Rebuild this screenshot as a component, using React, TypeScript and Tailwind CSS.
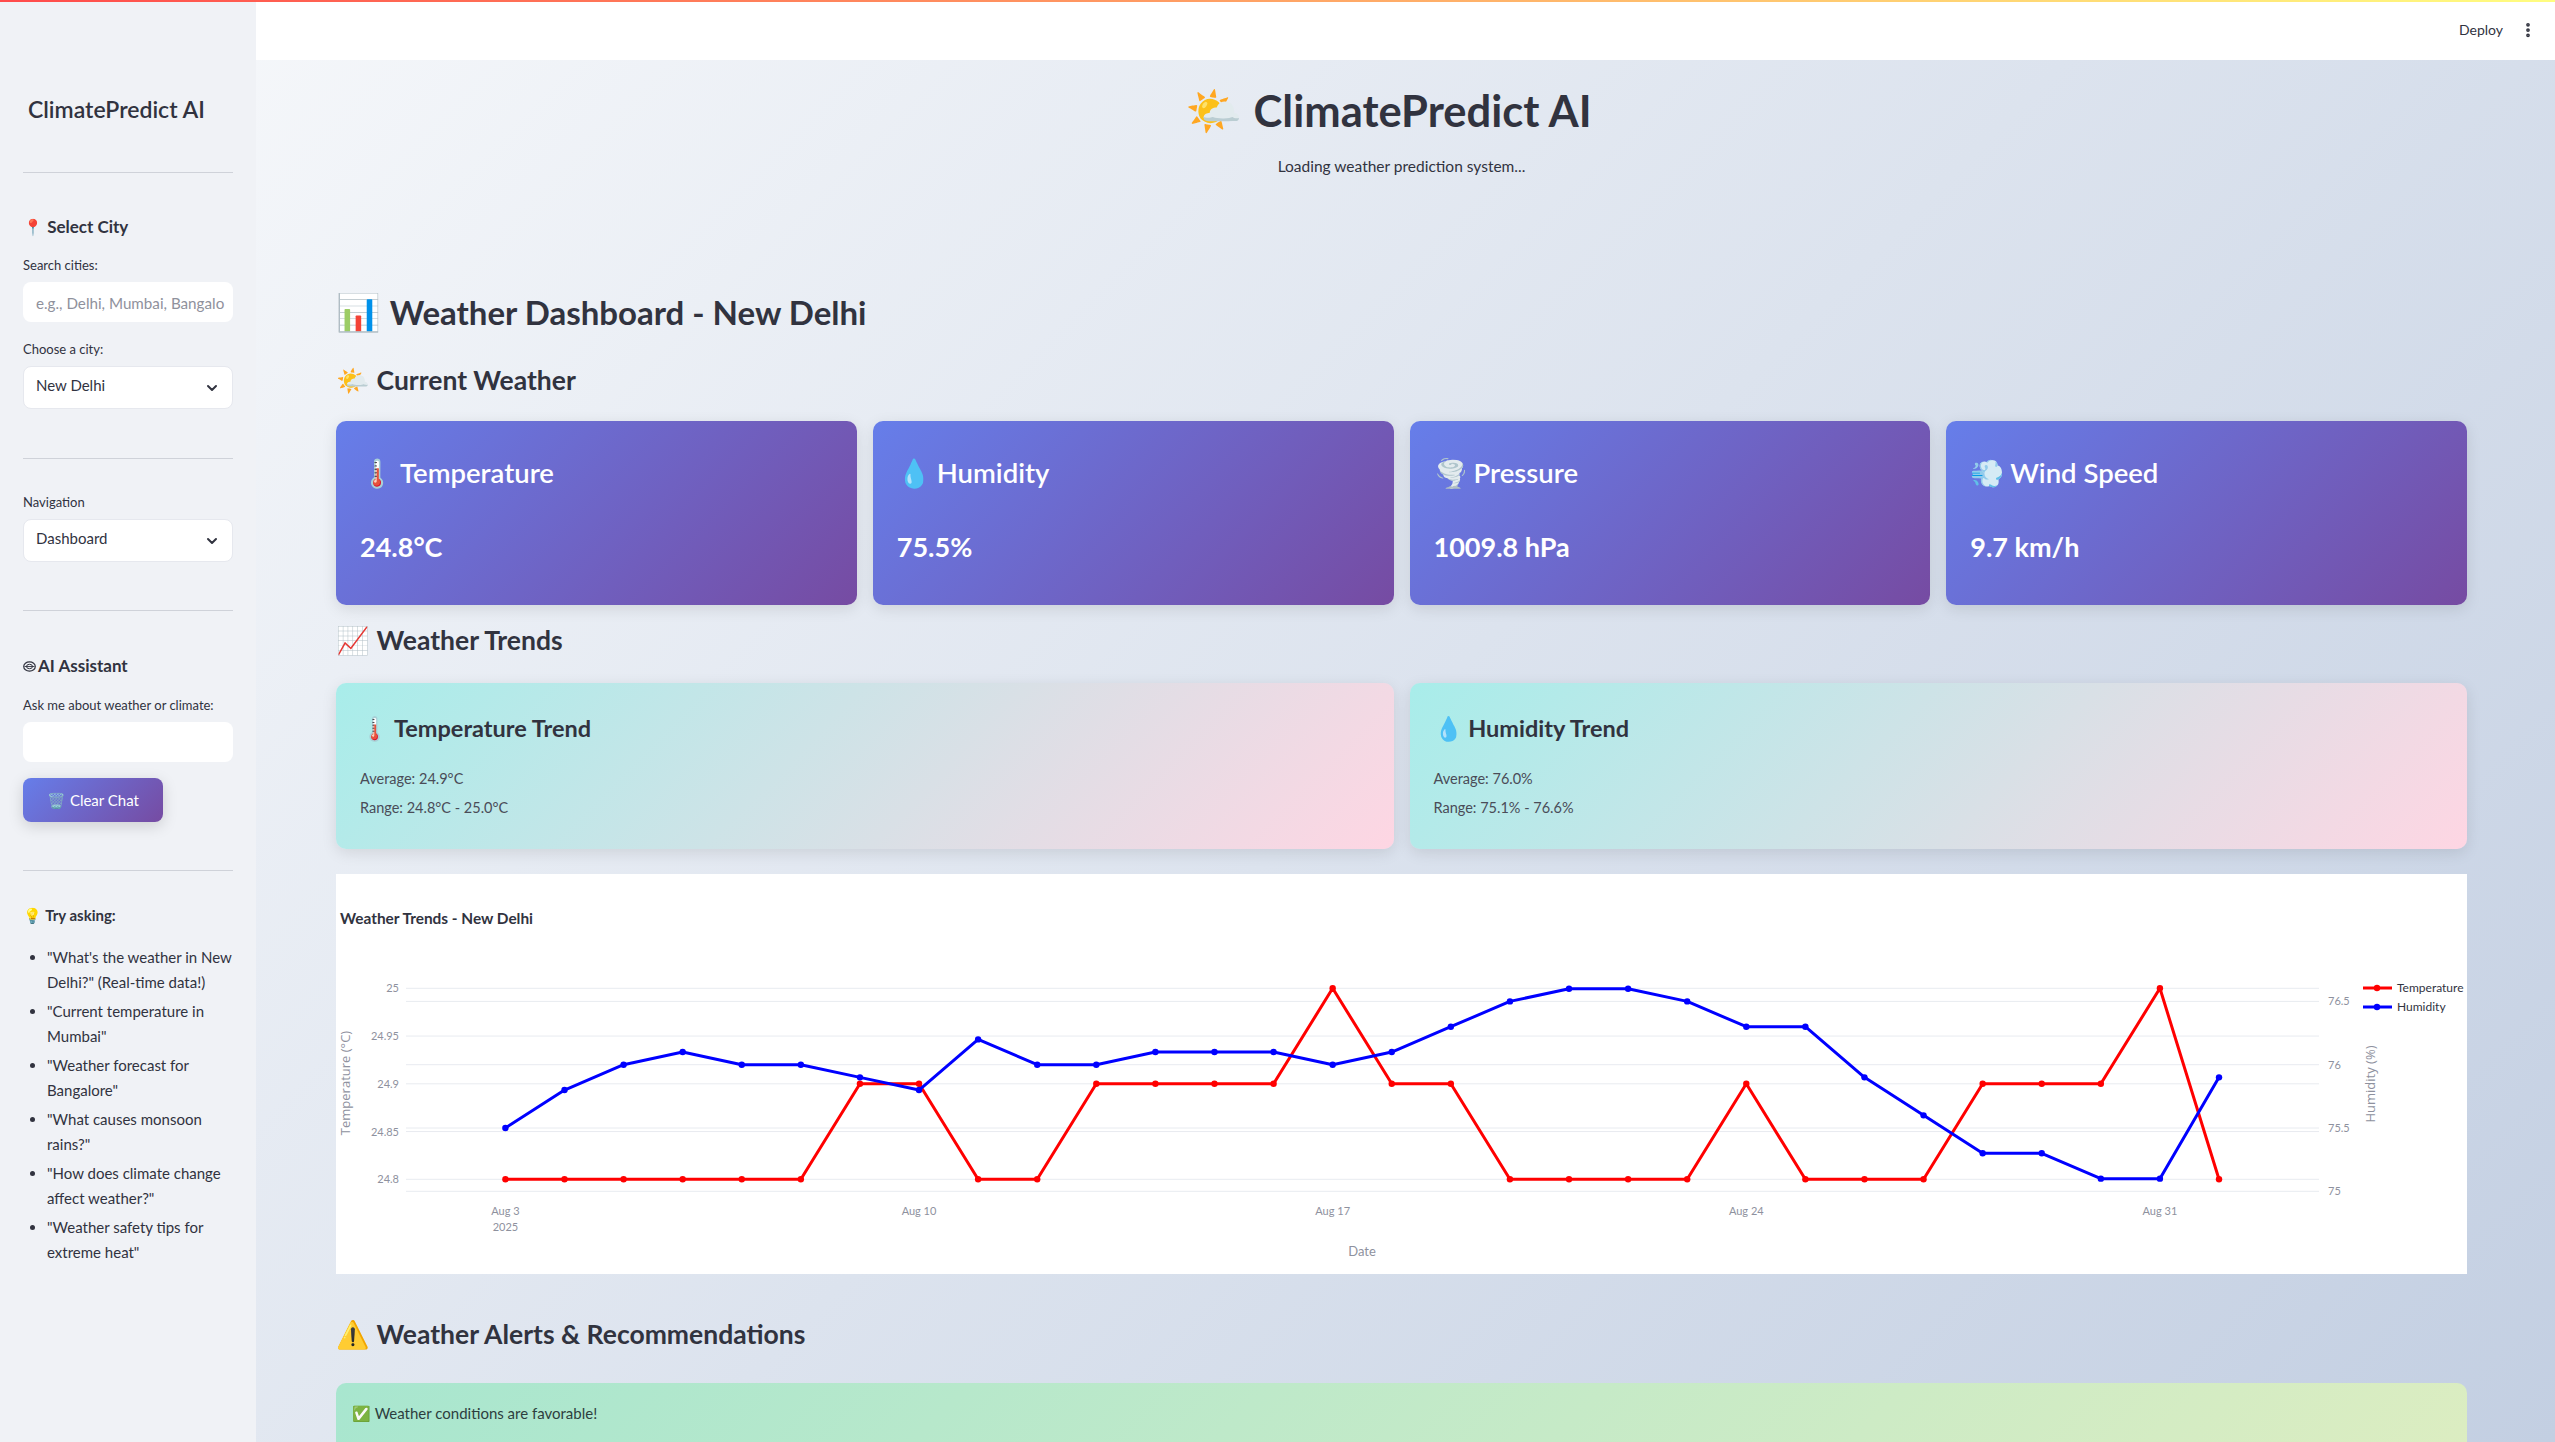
import { ChevronDown, EllipsisVertical } from 'lucide-react';

const FONT = 'font-["Lato","Noto_Sans",sans-serif]';

const temps = [24.8, 24.8, 24.8, 24.8, 24.8, 24.8, 24.9, 24.9, 24.8, 24.8, 24.9, 24.9, 24.9, 24.9, 25, 24.9, 24.9, 24.8, 24.8, 24.8, 24.8, 24.9, 24.8, 24.8, 24.8, 24.9, 24.9, 24.9, 25, 24.8];
const hums = [75.5, 75.8, 76, 76.1, 76, 76, 75.9, 75.8, 76.2, 76, 76, 76.1, 76.1, 76.1, 76, 76.1, 76.3, 76.5, 76.6, 76.6, 76.5, 76.3, 76.3, 75.9, 75.6, 75.3, 75.3, 75.1, 75.1, 75.9];

const px = (i: number) => 169.4 + i * 59.09;
const tempY = (v: number) => 114.3 + (25 - v) * 955;
const humY = (v: number) => 317.3 - (v - 75) * 126.6;

function WeatherChart() {
  const gridTemp = [25, 24.95, 24.9, 24.85, 24.8];
  const gridHum = [76.5, 76, 75.5, 75];
  const ticks = [
    { x: px(0), label: 'Aug 3' },
    { x: px(7), label: 'Aug 10' },
    { x: px(14), label: 'Aug 17' },
    { x: px(21), label: 'Aug 24' },
    { x: px(28), label: 'Aug 31' },
  ];
  return (
    <div className="mt-[25px] h-[400px] bg-white">
      <svg width="2131" height="400" viewBox="0 0 2131 400" className="block">
        <text x="4" y="50" fontSize="15.4" fontWeight="700" fill="#31333f" fontFamily="Lato">Weather Trends - New Delhi</text>
        {gridTemp.map((v) => (
          <g key={v}>
            <line x1="70" x2="1983" y1={tempY(v)} y2={tempY(v)} stroke="#e8ebf0" strokeWidth="1" />
            <text x="63" y={tempY(v) + 4} textAnchor="end" fontSize="11" fill="#8e919e" fontFamily="Lato">{v}</text>
          </g>
        ))}
        {gridHum.map((v) => (
          <g key={v}>
            <line x1="70" x2="1983" y1={humY(v)} y2={humY(v)} stroke="#e8ebf0" strokeWidth="1" />
            <text x="1992" y={humY(v) + 4} fontSize="11" fill="#8e919e" fontFamily="Lato">{v}</text>
          </g>
        ))}
        {ticks.map((t) => (
          <text key={t.label} x={t.x} y="341" textAnchor="middle" fontSize="11" fill="#8e919e" fontFamily="Lato">{t.label}</text>
        ))}
        <text x={px(0)} y="357" textAnchor="middle" fontSize="11" fill="#8e919e" fontFamily="Lato">2025</text>
        <text x="1026" y="382" textAnchor="middle" fontSize="13" fill="#8e919e" fontFamily="Lato">Date</text>
        <text transform="translate(14 209) rotate(-90)" textAnchor="middle" fontSize="13" fill="#8e919e" fontFamily="Open Sans">Temperature (°C)</text>
        <text transform="translate(2039 210) rotate(-90)" textAnchor="middle" fontSize="13" fill="#8e919e" fontFamily="Open Sans">Humidity (%)</text>

        <polyline points={temps.map((v, i) => `${px(i)},${tempY(v)}`).join(' ')} fill="none" stroke="#ff0000" strokeWidth="3" strokeLinejoin="round" />
        {temps.map((v, i) => <circle key={i} cx={px(i)} cy={tempY(v)} r="3.2" fill="#ff0000" />)}
        <polyline points={hums.map((v, i) => `${px(i)},${humY(v)}`).join(' ')} fill="none" stroke="#0000ff" strokeWidth="3" strokeLinejoin="round" />
        {hums.map((v, i) => <circle key={i} cx={px(i)} cy={humY(v)} r="3.2" fill="#0000ff" />)}

        <line x1="2027" x2="2056" y1="114" y2="114" stroke="#ff0000" strokeWidth="3" />
        <circle cx="2041" cy="114" r="3.2" fill="#ff0000" />
        <text x="2061" y="118" fontSize="12" fill="#31333f" fontFamily="Lato">Temperature</text>
        <line x1="2027" x2="2056" y1="133" y2="133" stroke="#0000ff" strokeWidth="3" />
        <circle cx="2041" cy="133" r="3.2" fill="#0000ff" />
        <text x="2061" y="137" fontSize="12" fill="#31333f" fontFamily="Lato">Humidity</text>
      </svg>
    </div>
  );
}

function SelectBox({ value }: { value: string }) {
  return (
    <div className="h-[43px] rounded-lg border border-[#e6e8ee] bg-white px-3 flex items-center justify-between text-[15px] text-[#31333f]">
      <span className="-mt-1">{value}</span>
      <ChevronDown size={16} strokeWidth={3} className="text-[#31333f]" />
    </div>
  );
}

function Metric({ emoji, label, value }: { emoji: string; label: string; value: string }) {
  return (
    <div className="h-[184px] rounded-[10px] bg-[linear-gradient(135deg,#667eea_0%,#764ba2_100%)] px-6 pt-[34px] text-white shadow-[0_4px_15px_rgba(0,0,0,0.1)]">
      <div className="text-[27.5px] font-semibold leading-[36px] flex items-center gap-1.5"><span>{emoji}</span><span>{label}</span></div>
      <div className="mt-[38px] text-[27px] font-bold leading-[36px]">{value}</div>
    </div>
  );
}

function TrendCard({ emoji, title, avg, range }: { emoji: string; title: string; avg: string; range: string }) {
  return (
    <div className="h-[166px] rounded-[10px] bg-[linear-gradient(135deg,#a8edea_0%,#fed6e3_100%)] px-6 pt-[29px] text-[#31333f] shadow-[0_4px_15px_rgba(0,0,0,0.1)]">
      <div className="text-[23.5px] font-bold leading-8">{emoji} {title}</div>
      <div className="mt-[20px] text-[14.5px] leading-[29px] text-[#4a4c58]">
        <p>Average: {avg}</p>
        <p>Range: {range}</p>
      </div>
    </div>
  );
}

function SectionTitle({ emoji, text, className }: { emoji: string; text: string; className: string }) {
  return (
    <h3 className={`${className} text-[27px] font-bold leading-9`}>
      {emoji} <span className="text-[26.5px]">{text}</span>
    </h3>
  );
}

function BrainGlyph() {
  return (
    <svg width="13" height="11" viewBox="0 0 13 11" className="mr-[2px] inline-block align-[0px]" fill="none" stroke="#31333f">
      <ellipse cx="6.5" cy="5.5" rx="5.8" ry="4.6" strokeWidth="1.2" />
      <ellipse cx="6.5" cy="5.5" rx="3" ry="2.2" strokeWidth="1" />
      <path d="M1.5 5.5h10" strokeWidth="0.9" />
    </svg>
  );
}

export default function App() {
  const tips = [
    '"What\'s the weather in New Delhi?" (Real-time data!)',
    '"Current temperature in Mumbai"',
    '"Weather forecast for Bangalore"',
    '"What causes monsoon rains?"',
    '"How does climate change affect weather?"',
    '"Weather safety tips for extreme heat"',
  ];
  return (
    <div className={`${FONT} relative flex h-screen overflow-hidden text-[#31333f]`}>
      <div className="absolute inset-x-0 top-0 z-10 h-[2px] bg-[linear-gradient(90deg,#ff4b4b,#fffd80)]" />

      <aside className="w-[256px] shrink-0 bg-[#f0f2f6] px-[23px]">
        <h2 className="mt-[93px] pl-[5px] text-[23px] font-semibold leading-8">ClimatePredict AI</h2>
        <hr className="mt-[47px] border-[#cfd2d9]" />
        <h3 className="mt-[42px] text-[17px] font-bold leading-6"><span className="text-[16px]">📍</span> Select City</h3>
        <p className="mt-[16px] text-[13px] leading-5">Search cities:</p>
        <div className="mt-[7px] h-10 overflow-hidden whitespace-nowrap rounded-lg bg-white pl-[13px] text-[15.2px] leading-[43px] text-[#8f919c]">e.g., Delhi, Mumbai, Bangalo</div>
        <p className="mt-[17px] text-[13px] leading-5">Choose a city:</p>
        <div className="mt-[7px]"><SelectBox value="New Delhi" /></div>
        <hr className="mt-[49px] border-[#cfd2d9]" />
        <p className="mt-[33px] text-[13px] leading-5">Navigation</p>
        <div className="mt-[7px]"><SelectBox value="Dashboard" /></div>
        <hr className="mt-[48px] border-[#cfd2d9]" />
        <h3 className="mt-[43px] text-[17px] font-bold leading-6"><BrainGlyph />AI Assistant</h3>
        <p className="mt-[17px] text-[13px] leading-5">Ask me about weather or climate:</p>
        <div className="mt-[7px] h-10 rounded-lg bg-white" />
        <button className="mt-4 h-11 w-[140px] rounded-lg bg-[linear-gradient(135deg,#667eea,#764ba2)] text-[15px] text-white shadow-[0_4px_15px_rgba(0,0,0,0.15)]">🗑️ Clear Chat</button>
        <hr className="mt-12 border-[#cfd2d9]" />
        <p className="mt-[32px] text-[15px] font-bold leading-6">💡 Try asking:</p>
        <ul className="mt-[18px] list-disc pl-6 text-[15px] leading-[25px]">
          {tips.map((t) => <li key={t} className="mb-1">{t}</li>)}
        </ul>
      </aside>

      <main className="flex-1 min-w-0 bg-[linear-gradient(135deg,#f5f7fa_0%,#c3cfe2_100%)]">
        <header className="flex h-[60px] items-center justify-end gap-4 bg-white pr-[18px] text-sm text-[#31333f]">
          <span>Deploy</span>
          <EllipsisVertical size={18} strokeWidth={3} />
        </header>
        <div className="pl-20 pr-[88px]">
          <h1 className="mt-[26px] pr-[26px] text-center text-[46px] font-bold leading-[48px]">🌤️ <span className="text-[43.5px]">ClimatePredict AI</span></h1>
          <p className="mt-[20px] text-center text-[15.5px] leading-6">Loading weather prediction system...</p>
          <h2 className="mt-[109px] text-[36px] font-bold leading-[48px]">📊 <span className="text-[33px]">Weather Dashboard - New Delhi</span></h2>
          <SectionTitle emoji="🌤️" text="Current Weather" className="mt-[26px]" />
          <div className="mt-[23px] grid grid-cols-4 gap-4">
            <Metric emoji="🌡️" label="Temperature" value="24.8°C" />
            <Metric emoji="💧" label="Humidity" value="75.5%" />
            <Metric emoji="🌪️" label="Pressure" value="1009.8 hPa" />
            <Metric emoji="💨" label="Wind Speed" value="9.7 km/h" />
          </div>
          <SectionTitle emoji="📈" text="Weather Trends" className="mt-[17px]" />
          <div className="mt-[25px] grid grid-cols-2 gap-4">
            <TrendCard emoji="🌡️" title="Temperature Trend" avg="24.9°C" range="24.8°C - 25.0°C" />
            <TrendCard emoji="💧" title="Humidity Trend" avg="76.0%" range="75.1% - 76.6%" />
          </div>
          <WeatherChart />
          <SectionTitle emoji="⚠️" text="Weather Alerts & Recommendations" className="mt-[42px]" />
          <div className="mt-[31px] h-[80px] rounded-[10px] bg-[linear-gradient(135deg,#a8e6cf,#dcedc1)] pl-4 pt-5 text-[15px] leading-5 text-[#2d3e3e]">✅ Weather conditions are favorable!</div>
        </div>
      </main>
    </div>
  );
}
